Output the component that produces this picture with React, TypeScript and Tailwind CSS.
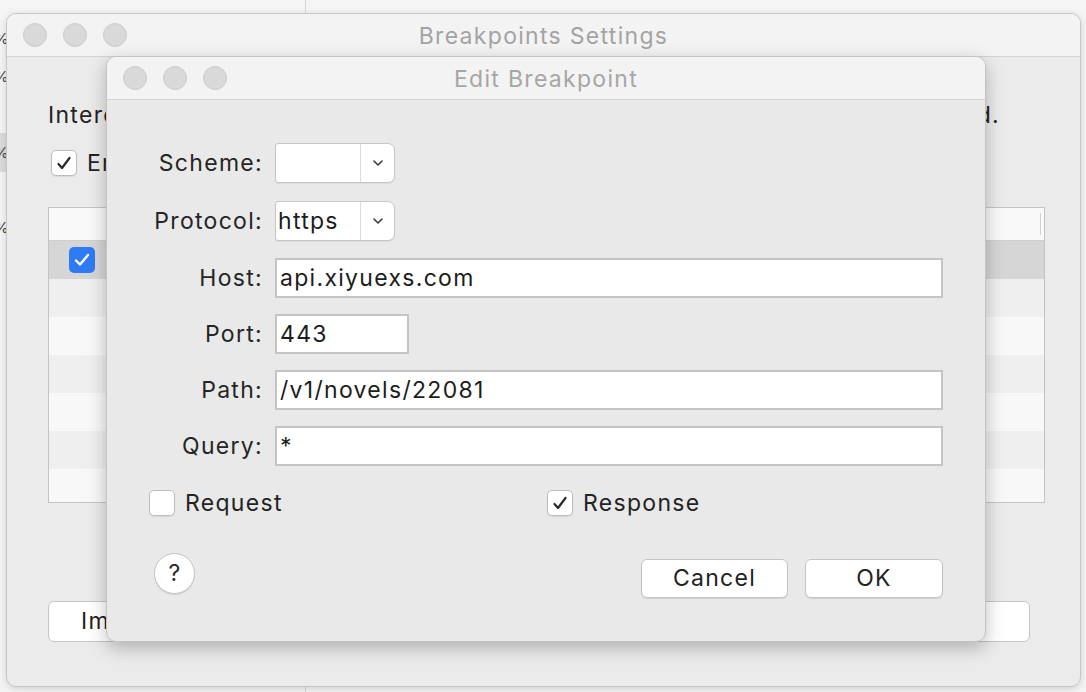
import React from "react";

const font = { fontFamily: "Inter, 'Liberation Sans', sans-serif" };

function Lights() {
  return (
    <div className="flex gap-4 pl-4">
      {[0, 1, 2].map((i) => (
        <div key={i} className="w-6 h-6 rounded-full bg-[#d9d9d9] border border-[#cbcbcb]" />
      ))}
    </div>
  );
}

function Check({ checked, blue }: { checked?: boolean; blue?: boolean }) {
  if (blue) {
    return (
      <div className="w-[26px] h-[26px] shrink-0 rounded-[5px] bg-[#2f7bf5] flex items-center justify-center">
        <svg width="16" height="14" viewBox="0 0 16 14">
          <path d="M2 7.5 L6 11.5 L14 2" fill="none" stroke="#fff" strokeWidth="2.4" strokeLinecap="round" strokeLinejoin="round" />
        </svg>
      </div>
    );
  }
  return (
    <div className="w-[26px] h-[26px] shrink-0 rounded-[5px] bg-white border border-[#bdbdbd] flex items-center justify-center shadow-[0_1px_1px_rgba(0,0,0,0.08)]">
      {checked && (
        <svg width="16" height="15" viewBox="0 0 16 15">
          <path d="M2.5 8 L6 12 L13.5 2" fill="none" stroke="#2a2a2a" strokeWidth="2.2" strokeLinecap="round" strokeLinejoin="round" />
        </svg>
      )}
    </div>
  );
}

function Popup({ value, width }: { value: string; width: number }) {
  return (
    <div
      className="h-10 flex bg-white border border-[#c6c6c6] rounded-l-[3px] rounded-r-[7px] shadow-[0_1px_1px_rgba(0,0,0,0.06)]"
      style={{ width }}
    >
      <div className="flex-1 flex items-center pl-[2px] text-[#1c1c1c]">{value}</div>
      <div className="w-[34px] border-l border-[#dadada] flex items-center justify-center">
        <svg width="12" height="8" viewBox="0 0 12 8">
          <path d="M2 2 L6 6 L10 2" fill="none" stroke="#3a3a3a" strokeWidth="1.6" strokeLinecap="round" strokeLinejoin="round" />
        </svg>
      </div>
    </div>
  );
}

function Field({ value, className }: { value: string; className?: string }) {
  return (
    <div className={"h-10 bg-white border-2 border-[#c4c4c4] flex items-center pl-[3px] text-[#1c1c1c] " + (className ?? "")}>
      {value}
    </div>
  );
}

function Row({ label, children, mt }: { label: string; children: React.ReactNode; mt: string }) {
  return (
    <div className={"flex items-center h-10 " + mt}>
      <div className="w-[120px] text-right whitespace-nowrap text-[#252525]">{label}</div>
      <div className="flex-1 pl-3">{children}</div>
    </div>
  );
}

const stripes = ["bg-[#efefef]", "bg-[#f8f8f8]", "bg-[#efefef]", "bg-[#f8f8f8]", "bg-[#efefef]", "bg-[#f8f8f8]"];

export default function App() {
  return (
    <div className="relative w-[1086px] h-[692px] overflow-hidden bg-[#f5f5f5] text-[23px] tracking-[1.3px]" style={font}>
      {/* desktop behind */}
      <div className="absolute left-[305px] top-0 h-full w-px bg-[#d6d6d6]" />
      <div className="absolute left-0 top-0 w-[6px] h-full overflow-hidden text-[#444] text-[15px] leading-none tracking-normal">
        <div className="absolute left-[-6px] top-[31px]">%</div>
        <div className="absolute left-[-6px] top-[69px]">%</div>
        <div className="absolute left-0 top-[133px] w-[6px] h-[39px] bg-[#dcdcdc]" />
        <div className="absolute left-[-6px] top-[145px]">%</div>
        <div className="absolute left-[-6px] top-[220px]">%</div>
      </div>

      {/* Breakpoints Settings window */}
      <div className="absolute left-[6px] top-[13px] w-[1075px] h-[674px] rounded-[10px] border border-[#c6c6c6] bg-[#ebebeb] overflow-hidden flex flex-col shadow-[0_2px_8px_rgba(0,0,0,0.15)]">
        <div className="h-[43px] shrink-0 bg-[#f3f3f3] border-b border-[#d2d2d2] relative flex items-center">
          <Lights />
          <div className="absolute inset-0 flex items-center justify-center pt-[2px] text-[#a3a3a3]">Breakpoints Settings</div>
        </div>
        <div className="flex-1 flex flex-col pl-[41px] pr-[35px]">
          <div className="flex justify-between pr-[45px] mt-[47px] text-[#232323] leading-none">
            <span>Intercept requests and responses</span>
            <span>matched.</span>
          </div>
          <div className="flex items-center gap-[10px] mt-[23px] ml-[3px] h-[26px] text-[#232323]">
            <Check checked />
            <span>Enable Breakpoints</span>
          </div>
          <div className="mt-[31px] h-[296px] border border-[#c4c4c4] bg-white flex flex-col overflow-hidden">
            <div className="h-[33px] shrink-0 bg-[#f9f9f9] border-b border-[#cfcfcf] flex justify-end pr-[3px] py-[5px]">
              <div className="w-px bg-[#d0d0d0]" />
            </div>
            <div className="h-[38px] shrink-0 bg-[#d6d6d6] flex items-center pl-[20px]">
              <Check blue />
            </div>
            {stripes.map((c, i) => (
              <div key={i} className={"h-[38px] shrink-0 " + c} />
            ))}
          </div>
          <div className="mt-[98px] flex justify-between">
            <div className="w-[160px] h-[41px] rounded-[6px] border border-[#c5c5c5] bg-white flex items-center pl-[32px] text-[#1e1e1e]">
              Import
            </div>
            <div className="w-[140px] h-[41px] rounded-[6px] border border-[#c5c5c5] bg-white mr-[15px]" />
          </div>
        </div>
      </div>

      {/* Edit Breakpoint sheet */}
      <div className="absolute left-[106px] top-[56px] w-[880px] h-[586px] rounded-[10px] border border-[#c4c4c4] bg-[#e9e9e9] overflow-hidden flex flex-col shadow-[0_6px_18px_rgba(0,0,0,0.25)]">
        <div className="h-[43px] shrink-0 bg-[#f3f3f3] border-b border-[#d3d3d3] relative flex items-center">
          <Lights />
          <div className="absolute inset-0 flex items-center justify-center pt-[2px] text-[#a6a6a6]">Edit Breakpoint</div>
        </div>
        <div className="flex-1 flex flex-col pl-[36px] pr-[42px] pt-[43px]">
          <Row label="Scheme:" mt="mt-0">
            <Popup value="" width={120} />
          </Row>
          <Row label="Protocol:" mt="mt-[18px]">
            <Popup value="https" width={120} />
          </Row>
          <Row label="Host:" mt="mt-[17px]">
            <Field value="api.xiyuexs.com" />
          </Row>
          <Row label="Port:" mt="mt-4">
            <Field value="443" className="w-[134px]" />
          </Row>
          <Row label="Path:" mt="mt-4">
            <Field value="/v1/novels/22081" />
          </Row>
          <Row label="Query:" mt="mt-4">
            <Field value="*" />
          </Row>
          <div className="flex items-center h-[26px] mt-[24px] pl-[6px] text-[#232323]">
            <div className="w-[398px] flex items-center gap-[10px]">
              <Check />
              <span>Request</span>
            </div>
            <div className="flex items-center gap-[10px]">
              <Check checked />
              <span>Response</span>
            </div>
          </div>
          <div className="flex items-start mt-[37px] pl-[11px]">
            <div className="w-[41px] h-[41px] rounded-full bg-white border border-[#c4c4c4] flex items-center justify-center tracking-normal text-[#2a2a2a] shadow-[0_1px_1px_rgba(0,0,0,0.1)]">
              ?
            </div>
            <div className="flex-1 flex justify-end gap-[17px] mt-[6px]">
              <div className="w-[147px] h-[39px] rounded-[6px] bg-white border border-[#c4c4c4] flex items-center justify-center text-[#222] shadow-[0_1px_1px_rgba(0,0,0,0.1)]">
                Cancel
              </div>
              <div className="w-[138px] h-[39px] rounded-[6px] bg-white border border-[#c4c4c4] flex items-center justify-center text-[#222] shadow-[0_1px_1px_rgba(0,0,0,0.1)]">
                OK
              </div>
            </div>
          </div>
        </div>
      </div>
    </div>
  );
}
